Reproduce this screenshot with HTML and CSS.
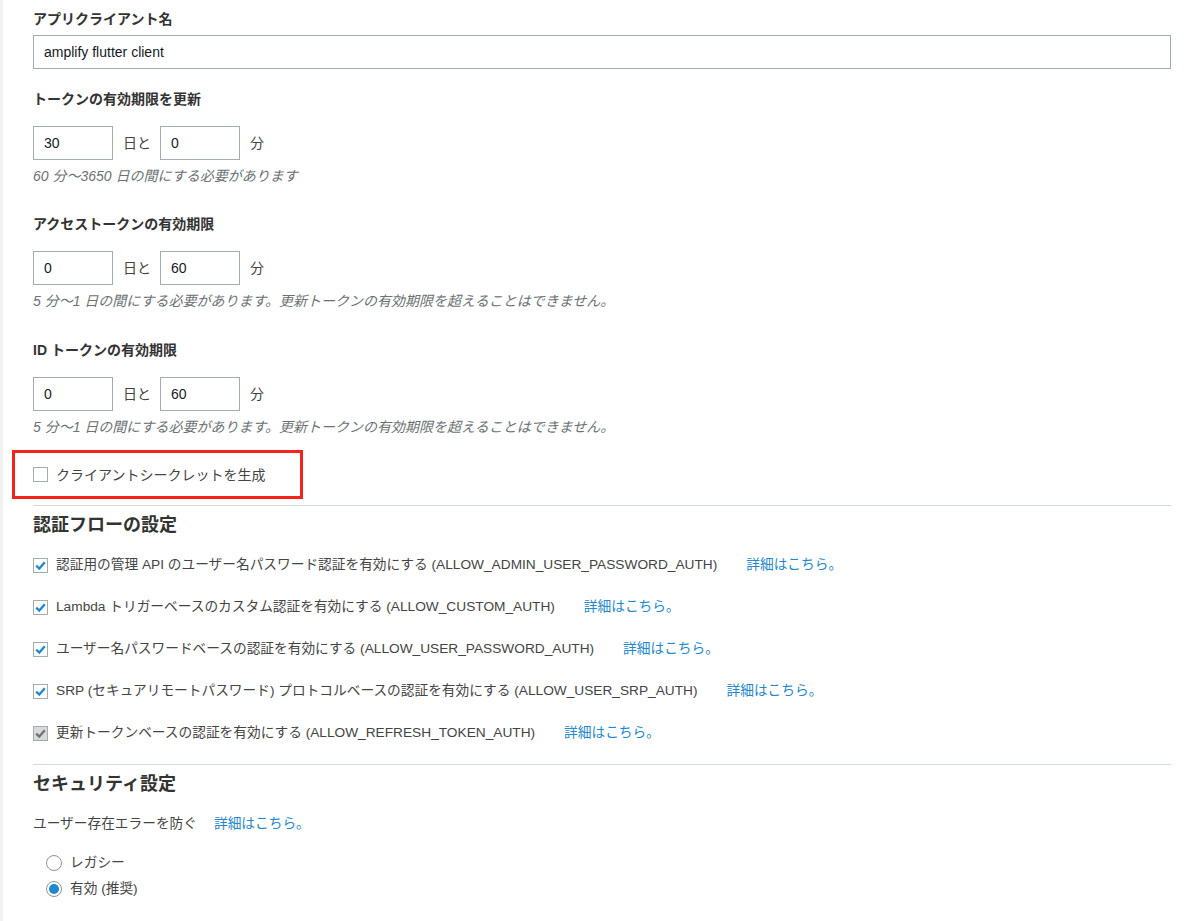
FILE: index.html
```html
<!DOCTYPE html>
<html lang="ja">
<head>
<meta charset="utf-8">
<title>アプリクライアント</title>
<link rel="stylesheet" href="styles.css">
</head>
<body>
<div class="page">
  <div class="field">
    <label class="label">アプリクライアント名</label>
    <input class="name-input" type="text" value="amplify flutter client">
  </div>

  <div class="field field-2">
    <label class="label">トークンの有効期限を更新</label>
    <div class="duration">
      <input class="num-input" type="text" value="30">
      <span class="unit">日と</span>
      <input class="num-input" type="text" value="0">
      <span class="unit">分</span>
    </div>
    <p class="help">60 分〜3650 日の間にする必要があります</p>
  </div>

  <div class="field field-3">
    <label class="label">アクセストークンの有効期限</label>
    <div class="duration">
      <input class="num-input" type="text" value="0">
      <span class="unit">日と</span>
      <input class="num-input" type="text" value="60">
      <span class="unit">分</span>
    </div>
    <p class="help">5 分〜1 日の間にする必要があります。更新トークンの有効期限を超えることはできません。</p>
  </div>

  <div class="field field-4">
    <label class="label">ID トークンの有効期限</label>
    <div class="duration">
      <input class="num-input" type="text" value="0">
      <span class="unit">日と</span>
      <input class="num-input" type="text" value="60">
      <span class="unit">分</span>
    </div>
    <p class="help">5 分〜1 日の間にする必要があります。更新トークンの有効期限を超えることはできません。</p>
  </div>

  <div class="highlight">
    <div class="check-row">
      <span class="box"></span>
      <span class="check-text check-text-lg">クライアントシークレットを生成</span>
    </div>
  </div>

  <hr class="divider divider-1">

  <h2 class="heading">認証フローの設定</h2>
  <div class="checklist">
    <div class="check-row">
      <span class="box"><svg viewBox="0 0 15 15" width="15" height="15"><path d="M3.2 7.6 L6.3 10.6 L11.8 4.2" fill="none" stroke="#1f88d2" stroke-width="2.3"/></svg></span>
      <span class="check-text">認証用の管理 API のユーザー名パスワード認証を有効にする (ALLOW_ADMIN_USER_PASSWORD_AUTH)</span>
      <a class="link" href="#">詳細はこちら。</a>
    </div>
    <div class="check-row">
      <span class="box"><svg viewBox="0 0 15 15" width="15" height="15"><path d="M3.2 7.6 L6.3 10.6 L11.8 4.2" fill="none" stroke="#1f88d2" stroke-width="2.3"/></svg></span>
      <span class="check-text">Lambda トリガーベースのカスタム認証を有効にする (ALLOW_CUSTOM_AUTH)</span>
      <a class="link" href="#">詳細はこちら。</a>
    </div>
    <div class="check-row">
      <span class="box"><svg viewBox="0 0 15 15" width="15" height="15"><path d="M3.2 7.6 L6.3 10.6 L11.8 4.2" fill="none" stroke="#1f88d2" stroke-width="2.3"/></svg></span>
      <span class="check-text">ユーザー名パスワードベースの認証を有効にする (ALLOW_USER_PASSWORD_AUTH)</span>
      <a class="link" href="#">詳細はこちら。</a>
    </div>
    <div class="check-row">
      <span class="box"><svg viewBox="0 0 15 15" width="15" height="15"><path d="M3.2 7.6 L6.3 10.6 L11.8 4.2" fill="none" stroke="#1f88d2" stroke-width="2.3"/></svg></span>
      <span class="check-text">SRP (セキュアリモートパスワード) プロトコルベースの認証を有効にする (ALLOW_USER_SRP_AUTH)</span>
      <a class="link" href="#">詳細はこちら。</a>
    </div>
    <div class="check-row">
      <span class="box box-disabled"><svg viewBox="0 0 15 15" width="15" height="15"><path d="M3.2 7.6 L6.3 10.6 L11.8 4.2" fill="none" stroke="#6f7475" stroke-width="2.3"/></svg></span>
      <span class="check-text">更新トークンベースの認証を有効にする (ALLOW_REFRESH_TOKEN_AUTH)</span>
      <a class="link" href="#">詳細はこちら。</a>
    </div>
  </div>

  <hr class="divider divider-2">

  <h2 class="heading">セキュリティ設定</h2>
  <p class="plain">ユーザー存在エラーを防ぐ<a class="link link-inline" href="#">詳細はこちら。</a></p>

  <div class="radios">
    <div class="radio-row">
      <svg class="radio" viewBox="0 0 16 16" width="16" height="16"><circle cx="8" cy="8" r="7.5" fill="#fff" stroke="#8e9697" stroke-width="1"/></svg>
      <span class="radio-text">レガシー</span>
    </div>
    <div class="radio-row">
      <svg class="radio" viewBox="0 0 16 16" width="16" height="16"><circle cx="8" cy="8" r="7.5" fill="#fff" stroke="#8e9697" stroke-width="1"/><circle cx="8" cy="8" r="5" fill="#1f88d2"/></svg>
      <span class="radio-text">有効 (推奨)</span>
    </div>
  </div>
</div>
</body>
</html>
```

FILE: styles.css
```css
html, body {
  margin: 0;
  padding: 0;
  background: #ffffff;
}

body {
  font-family: "Liberation Sans", "Noto Sans CJK JP", sans-serif;
  font-size: 14px;
  color: #444444;
}

.page {
  min-height: 921px;
  box-sizing: border-box;
  border-left: 3px solid #f0f2f2;
  padding: 9px 29px 0 30px;
}

.field {
  display: flex;
  flex-direction: column;
}

.label {
  display: block;
  font-size: 14px;
  font-weight: bold;
  line-height: 20px;
  color: #333333;
}

.field-2 { margin-top: 20px; }
.field-3 { margin-top: 28px; }
.field-4 { margin-top: 29px; }

.name-input {
  margin: 6px 0 0;
  width: 100%;
  height: 34px;
  box-sizing: border-box;
  border: 1px solid #a3adae;
  border-radius: 0;
  padding: 0 10px;
  font-family: "Liberation Sans", "Noto Sans CJK JP", sans-serif;
  font-size: 14px;
  color: #16191f;
  background: #fff;
  outline: none;
}

.duration {
  margin-top: 17px;
  display: flex;
  align-items: center;
  height: 34px;
}

.num-input {
  margin: 0;
  width: 80px;
  height: 34px;
  box-sizing: border-box;
  border: 1px solid #a3adae;
  border-radius: 0;
  padding: 0 10px;
  font-family: "Liberation Sans", "Noto Sans CJK JP", sans-serif;
  font-size: 14px;
  color: #16191f;
  background: #fff;
  outline: none;
}

.unit {
  margin: 0 9px 0 10px;
  font-size: 14px;
  line-height: 20px;
  color: #444444;
}

.help {
  margin: 6px 0 0;
  font-size: 14px;
  line-height: 20px;
  font-style: italic;
  color: #6b7273;
}

.highlight {
  margin: 13px 0 0 -21px;
  width: 291px;
  height: 49px;
  box-sizing: border-box;
  border: 3px solid #f5231b;
  padding-left: 18px;
  display: flex;
  align-items: center;
}

.check-row {
  display: flex;
  align-items: center;
  height: 20px;
}

.box {
  width: 15px;
  height: 15px;
  box-sizing: border-box;
  border: 1px solid #a3adae;
  background: #fff;
  flex: none;
  position: relative;
  display: flex;
  align-items: center;
  justify-content: center;
}

.box svg {
  position: absolute;
  left: -1px;
  top: -1px;
}

.box-disabled {
  background: #d9dbdb;
  border-color: #a7aaab;
}

.check-text {
  margin-left: 8px;
  font-size: 13.7px;
  line-height: 20px;
  color: #444444;
  white-space: nowrap;
}

.check-text-lg {
  font-size: 14px;
}

.link {
  margin-left: 29px;
  font-size: 13.7px;
  line-height: 20px;
  color: #1e88d0;
  text-decoration: none;
  white-space: nowrap;
}

.divider {
  margin: 0;
  border: 0;
  height: 1px;
  background: #d5d8d8;
}

.divider-1 { margin-top: 6px; }
.divider-2 { margin-top: 21px; }

.heading {
  margin: 7px 0 0;
  font-size: 18px;
  line-height: 24px;
  font-weight: bold;
  color: #333333;
}

.checklist {
  margin-top: 18px;
  display: flex;
  flex-direction: column;
  gap: 22px;
}

.plain {
  margin: 18px 0 0;
  font-size: 13.7px;
  line-height: 20px;
  color: #444444;
}

.link-inline {
  margin-left: 17px;
}

.radios {
  margin-top: 19px;
  padding-left: 13px;
  display: flex;
  flex-direction: column;
  gap: 6px;
}

.radio-row {
  display: flex;
  align-items: center;
  height: 20px;
}

.radio {
  flex: none;
}

.radio-text {
  margin-left: 8px;
  font-size: 13.7px;
  line-height: 20px;
  color: #444444;
}
```
